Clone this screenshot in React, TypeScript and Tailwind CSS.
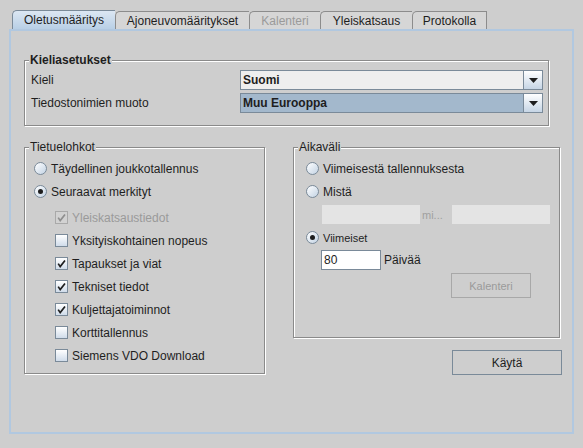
import React from 'react';

const tabs = [
    { label: 'Oletusmääritys', w: 'w-[103px]', selected: true },
    { label: 'Ajoneuvomääritykset', w: 'w-[134px]' },
    { label: 'Kalenteri', w: 'w-[71px]', disabled: true },
    { label: 'Yleiskatsaus', w: 'w-[92px]' },
    { label: 'Protokolla', w: 'w-[75px]', last: true },
];

const Radio = ({ checked }: { checked?: boolean }) => (
    <span className="w-[13px] h-[13px] shrink-0 rounded-full border border-[#7a8a99] bg-linear-to-br from-white to-[#c3d3e4] flex items-center justify-center">
        {checked && <span className="w-[5px] h-[5px] rounded-full bg-[#1e1e1e]" />}
    </span>
);

const Check = ({ checked, disabled }: { checked?: boolean; disabled?: boolean }) => (
    <span
        className={
            disabled
                ? 'w-[13px] h-[13px] shrink-0 border border-[#a9a9a9] bg-[#d2d2d2] flex items-center justify-center'
                : 'w-[13px] h-[13px] shrink-0 border border-[#7a8a99] bg-linear-to-b from-white to-[#d0dcea] flex items-center justify-center'
        }
    >
        {checked && (
            <svg width="9" height="9" viewBox="0 0 9 9">
                <path
                    d="M1.2 4.6 L3.2 7.6 L8 1.4"
                    fill="none"
                    stroke={disabled ? '#8f8f8f' : '#1e1e1e'}
                    strokeWidth="1.7"
                />
            </svg>
        )}
    </span>
);

const Group = ({
    title,
    bold,
    className,
    children,
}: {
    title: string;
    bold?: boolean;
    className: string;
    children: React.ReactNode;
}) => (
    <fieldset
        className={`m-0 p-0 min-w-0 border border-[#8a8a8a] shadow-[1px_1px_0_#ffffff,inset_1px_1px_0_#ffffff] ${className}`}
    >
        <legend className={`ml-[4px] px-[1px] bg-[#cecece] leading-[14px] ${bold ? 'font-bold' : ''}`}>{title}</legend>
        {children}
    </fieldset>
);

const Combo = ({ value, focused }: { value: string; focused?: boolean }) => (
    <div
        className={`flex h-[20px] w-[303px] border border-[#7a8a99] ${focused ? 'bg-[#a3b8cc]' : 'bg-[#eeeeee]'}`}
    >
        <div className="flex-1 pl-[2px] flex items-center font-bold text-[#1e1e1e]">{value}</div>
        <div className="w-[19px] border-l border-[#7a8a99] bg-linear-to-b from-white to-[#c6d5e5] flex items-center justify-center">
            <svg width="9" height="5" viewBox="0 0 9 5">
                <path d="M0 0 H9 L4.5 5 Z" fill="#1e1e1e" />
            </svg>
        </div>
    </div>
);

const blocks = [
    { label: 'Yleiskatsaustiedot', checked: true, disabled: true },
    { label: 'Yksityiskohtainen nopeus' },
    { label: 'Tapaukset ja viat', checked: true },
    { label: 'Tekniset tiedot', checked: true },
    { label: 'Kuljettajatoiminnot', checked: true },
    { label: 'Korttitallennus' },
    { label: 'Siemens VDO Download' },
];

const App = () => {
    return (
        <div className="w-[583px] h-[448px] bg-[#cecece] pt-[10px] font-['Liberation_Sans',Arial,sans-serif] text-[12px] leading-[14px] text-[#1e1e1e] select-none">
            {/* Tab strip */}
            <div className="flex items-end h-[19px] ml-[12px]">
                {tabs.map(t => (
                    <div
                        key={t.label}
                        className={`${t.w} flex items-center justify-center border-l border-t rounded-tl-[5px] ${
                            t.selected
                                ? 'h-[19px] bg-linear-to-b from-[#dce7f3] to-[#b8cfe5] border-[#7a8a99]'
                                : 'h-[18px] bg-[#d6d6d6] border-[#8c8c8c]'
                        } ${t.last ? 'border-r' : ''} ${t.disabled ? 'text-[#9a9a9a]' : ''}`}
                    >
                        {t.label}
                    </div>
                ))}
            </div>

            {/* Tab content */}
            <div className="ml-[9px] w-[565px] h-[405px] border-2 border-[#b1c8e0] pt-[22px] pl-[13px]">
                <Group title="Kieliasetukset" bold className="w-[525px]">
                    <div className="pl-[6px] pt-[3px] pb-[12px] flex flex-col gap-[3px]">
                        <div className="flex items-center">
                            <span className="w-[209px]">Kieli</span>
                            <Combo value="Suomi" />
                        </div>
                        <div className="flex items-center">
                            <span className="w-[209px]">Tiedostonimien muoto</span>
                            <Combo value="Muu Eurooppa" focused />
                        </div>
                    </div>
                </Group>

                <div className="flex items-start mt-[14px]">
                    {/* Tietuelohkot */}
                    <Group title="Tietuelohkot" className="w-[241px]">
                        <div className="pt-[3px] pb-[6px]">
                            <div className="h-[23px] flex items-center pl-[9px] gap-[4px]">
                                <Radio />
                                <span>Täydellinen joukkotallennus</span>
                            </div>
                            <div className="h-[23px] flex items-center pl-[9px] gap-[4px]">
                                <Radio checked />
                                <span>Seuraavat merkityt</span>
                            </div>
                            <div className="mt-[3px]">
                                {blocks.map(b => (
                                    <div key={b.label} className="h-[23px] flex items-center pl-[30px] gap-[4px]">
                                        <Check checked={b.checked} disabled={b.disabled} />
                                        <span className={b.disabled ? 'text-[#9a9a9a]' : ''}>{b.label}</span>
                                    </div>
                                ))}
                            </div>
                        </div>
                    </Group>

                    <div className="ml-[28px] flex flex-col">
                        {/* Aikaväli */}
                        <Group title="Aikaväli" className="w-[267px]">
                            <div className="pt-[3px] pb-[39px]">
                                <div className="h-[23px] flex items-center pl-[12px] gap-[4px]">
                                    <Radio />
                                    <span>Viimeisestä tallennuksesta</span>
                                </div>
                                <div className="h-[23px] flex items-center pl-[12px] gap-[4px]">
                                    <Radio />
                                    <span>Mistä</span>
                                </div>
                                <div className="mt-[2px] flex items-center pl-[28px]">
                                    <div className="w-[98px] h-[19px] bg-[#e4e4e4]" />
                                    <span className="w-[32px] pl-[2px] text-[11px] text-[#a0a0a0]">mi...</span>
                                    <div className="w-[98px] h-[19px] bg-[#e4e4e4]" />
                                </div>
                                <div className="mt-[2px] h-[23px] flex items-center pl-[12px] gap-[4px]">
                                    <Radio checked />
                                    <span className="text-[11px]">Viimeiset</span>
                                </div>
                                <div className="mt-[1px] flex items-center pl-[27px] gap-[3px]">
                                    <div className="w-[60px] h-[20px] bg-white border border-[#7a8a99] pl-[2px] flex items-center">
                                        80
                                    </div>
                                    <span>Päivää</span>
                                </div>
                                <div className="mt-[3px] pl-[157px]">
                                    <div className="w-[80px] h-[25px] border border-[#a8a8a8] flex items-center justify-center text-[11px] text-[#9a9a9a]">
                                        Kalenteri
                                    </div>
                                </div>
                            </div>
                        </Group>

                        <div className="mt-[12px] ml-[159px] w-[110px] h-[25px] border border-[#7a8a99] flex items-center justify-center">
                            Käytä
                        </div>
                    </div>
                </div>
            </div>
        </div>
    );
};

export default App;
